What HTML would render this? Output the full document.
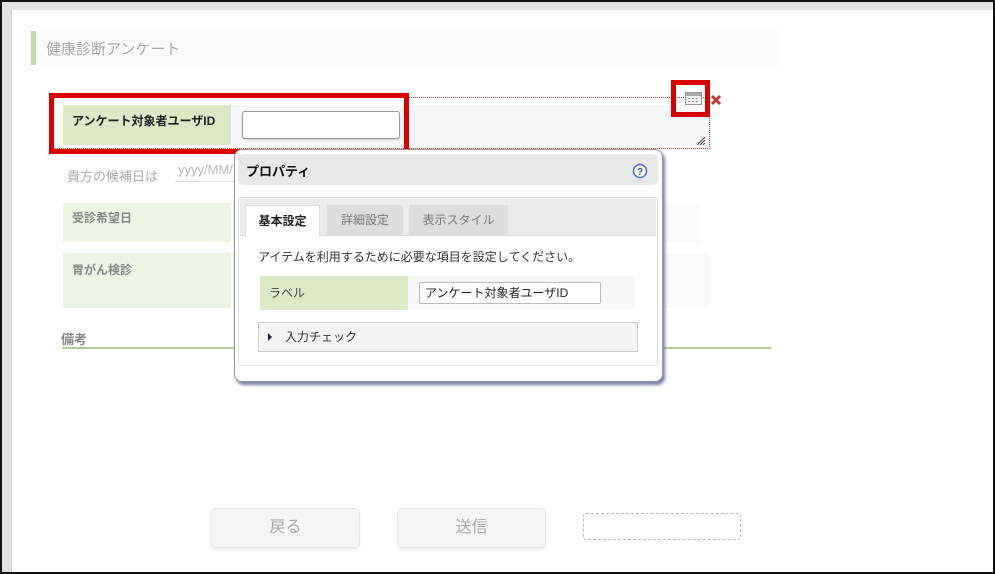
<!DOCTYPE html>
<html><head><meta charset="utf-8"><style>
*{box-sizing:border-box;margin:0;padding:0}
body{width:995px;height:574px;overflow:hidden;background:#e2e2e2;font-family:"Liberation Sans","Noto Sans CJK JP",sans-serif;position:relative}
.a{position:absolute}
#frame{left:0;top:0;width:995px;height:574px;border:2px solid #111;border-right-width:2px}
#page{left:11px;top:10px;width:982px;height:562px;background:#fff;border-left:1px solid #ccc}
.t{white-space:nowrap}
</style></head><body>
<div class="a" id="page"></div>
<div class="a" style="left:31px;top:31px;width:750px;height:34px;background:#fafafa;border-left:5px solid #c5d9b0"></div>
<div class="a t" style="left:46px;top:38px;font-size:15px;color:#aaa">健康診断アンケート</div>
<div class="a" style="left:52px;top:97px;width:658px;height:52px;border-top:1px dotted #d33;border-right:1px dotted #d33;border-bottom:1px dotted #d33"></div>
<div class="a" style="left:232px;top:105px;width:472px;height:40px;background:#f7f7f7"></div>
<div class="a" style="left:63px;top:105px;width:168px;height:40px;background:#dde9c6"></div>
<div class="a t" style="left:72px;top:112px;font-size:12px;font-weight:bold;color:#222">アンケート対象者ユーザID</div>
<div class="a" style="left:242px;top:111px;width:158px;height:28px;background:#fff;border:1px solid #999;border-radius:3px;box-shadow:0 1px 2px #ccc"></div>
<svg class="a" style="left:696px;top:136px" width="10" height="10"><path d="M1 9L9 1M4 9L9 4M7 9L9 7M2 8L8 2" stroke="#444" stroke-width="1"/></svg>
<div class="a" style="left:49px;top:93px;width:360px;height:61px;border:5px solid #d90000"></div>
<div class="a" style="left:671px;top:80px;width:39px;height:37px;border:5px solid #d90000"></div>
<svg class="a" style="left:685px;top:92px" width="18" height="14"><rect x="0.5" y="0.5" width="16" height="12" fill="#f2f2f2" stroke="#999"/><rect x="1" y="1" width="15" height="3" fill="#aaa"/><g fill="#7a9"><rect x="3" y="6" width="2" height="1"/><rect x="7" y="6" width="2" height="1"/><rect x="11" y="6" width="2" height="1"/><rect x="3" y="9" width="2" height="1"/><rect x="7" y="9" width="2" height="1" fill="#c77"/><rect x="11" y="9" width="2" height="1" fill="#77c"/></g></svg>
<svg class="a" style="left:710px;top:93px" width="12" height="14"><path d="M2 3L10 11M10 3L2 11" stroke="#c33" stroke-width="3"/></svg>
<div class="a t" style="left:67px;top:166px;font-size:13px;color:#aaa">貴方の候補日は</div>
<div class="a" style="left:175px;top:158px;width:60px;height:24px;border-bottom:1px solid #ddd"></div>
<div class="a t" style="left:178px;top:162px;font-size:13px;color:#bbb">yyyy/MM/</div>
<div class="a" style="left:232px;top:203px;width:468px;height:39px;background:#fafafa"></div>
<div class="a" style="left:63px;top:203px;width:168px;height:39px;background:#eef4e3"></div>
<div class="a t" style="left:72px;top:209px;font-size:12px;color:#888;font-weight:bold">受診希望日</div>
<div class="a" style="left:232px;top:253px;width:478px;height:55px;background:#fafafa"></div>
<div class="a" style="left:63px;top:253px;width:168px;height:55px;background:#eef4e3"></div>
<div class="a t" style="left:72px;top:261px;font-size:12px;color:#888;font-weight:bold">胃がん検診</div>
<div class="a t" style="left:61px;top:329px;font-size:13px;color:#888;font-weight:bold">備考</div>
<div class="a" style="left:62px;top:347px;width:709px;height:2px;background:#b5cc98"></div>
<div class="a" style="left:211px;top:508px;width:149px;height:40px;background:#f5f5f5;border:1px solid #e6e6e6;border-radius:5px;box-shadow:0 2px 2px #eee;text-align:center;line-height:38px;font-size:16px;color:#aaa">戻る</div>
<div class="a" style="left:397px;top:508px;width:149px;height:40px;background:#f5f5f5;border:1px solid #e6e6e6;border-radius:5px;box-shadow:0 2px 2px #eee;text-align:center;line-height:38px;font-size:16px;color:#aaa">送信</div>
<div class="a" style="left:583px;top:513px;width:158px;height:27px;border:1px dashed #bbb;border-radius:3px"></div>
<div class="a" style="left:234px;top:149px;width:429px;height:233px;background:#fff;border:1px solid #999;border-radius:8px;box-shadow:2px 3px 3px #7a7ab0"></div>
<div class="a" style="left:238px;top:154px;width:420px;height:31px;background:#e8e8e8;border-radius:5px"></div>
<div class="a t" style="left:246px;top:161px;font-size:13px;font-weight:bold;color:#111">プロパティ</div>
<svg class="a" style="left:632px;top:163px" width="16" height="16"><circle cx="8" cy="8" r="6.5" fill="#fff" stroke="#4a6ad0" stroke-width="1.5"/><text x="8" y="12" font-size="10" font-weight="bold" text-anchor="middle" fill="#3050c0" font-family="Liberation Sans">?</text></svg>
<div class="a" style="left:238px;top:197px;width:420px;height:169px;border:1px solid #ddd;border-radius:3px"></div>
<div class="a" style="left:240px;top:199px;width:416px;height:37px;background:#ebebeb;border-bottom:1px solid #ddd"></div>
<div class="a t" style="left:245px;top:205px;width:75px;height:32px;background:#fff;border:1px solid #ddd;border-bottom:none;text-align:center;line-height:30px;font-size:12px;font-weight:bold;color:#222">基本設定</div>
<div class="a t" style="left:327px;top:205px;width:76px;height:31px;background:#ddd;text-align:center;line-height:30px;font-size:12px;color:#777">詳細設定</div>
<div class="a t" style="left:409px;top:205px;width:99px;height:31px;background:#ddd;text-align:center;line-height:30px;font-size:12px;color:#777">表示スタイル</div>
<div class="a t" style="left:258px;top:248px;font-size:12px;color:#333">アイテムを利用するために必要な項目を設定してください。</div>
<div class="a" style="left:408px;top:276px;width:227px;height:34px;background:#f7f7f7"></div>
<div class="a" style="left:260px;top:276px;width:148px;height:34px;background:#dde9c6"></div>
<div class="a t" style="left:269px;top:284px;font-size:12px;color:#444">ラベル</div>
<div class="a t" style="left:419px;top:282px;width:182px;height:22px;background:#fff;border:1px solid #bbb;border-radius:2px;font-size:12px;color:#222;padding-left:5px;line-height:20px">アンケート対象者ユーザID</div>
<div class="a" style="left:258px;top:322px;width:380px;height:30px;background:#f4f4f4;border:1px solid #ccc"></div>
<svg class="a" style="left:267px;top:332px" width="6" height="10"><path d="M1 1L5 5L1 9Z" fill="#224"/></svg>
<div class="a t" style="left:285px;top:328px;font-size:12px;color:#333">入力チェック</div>
<div class="a" id="frame"></div>
</body></html>
